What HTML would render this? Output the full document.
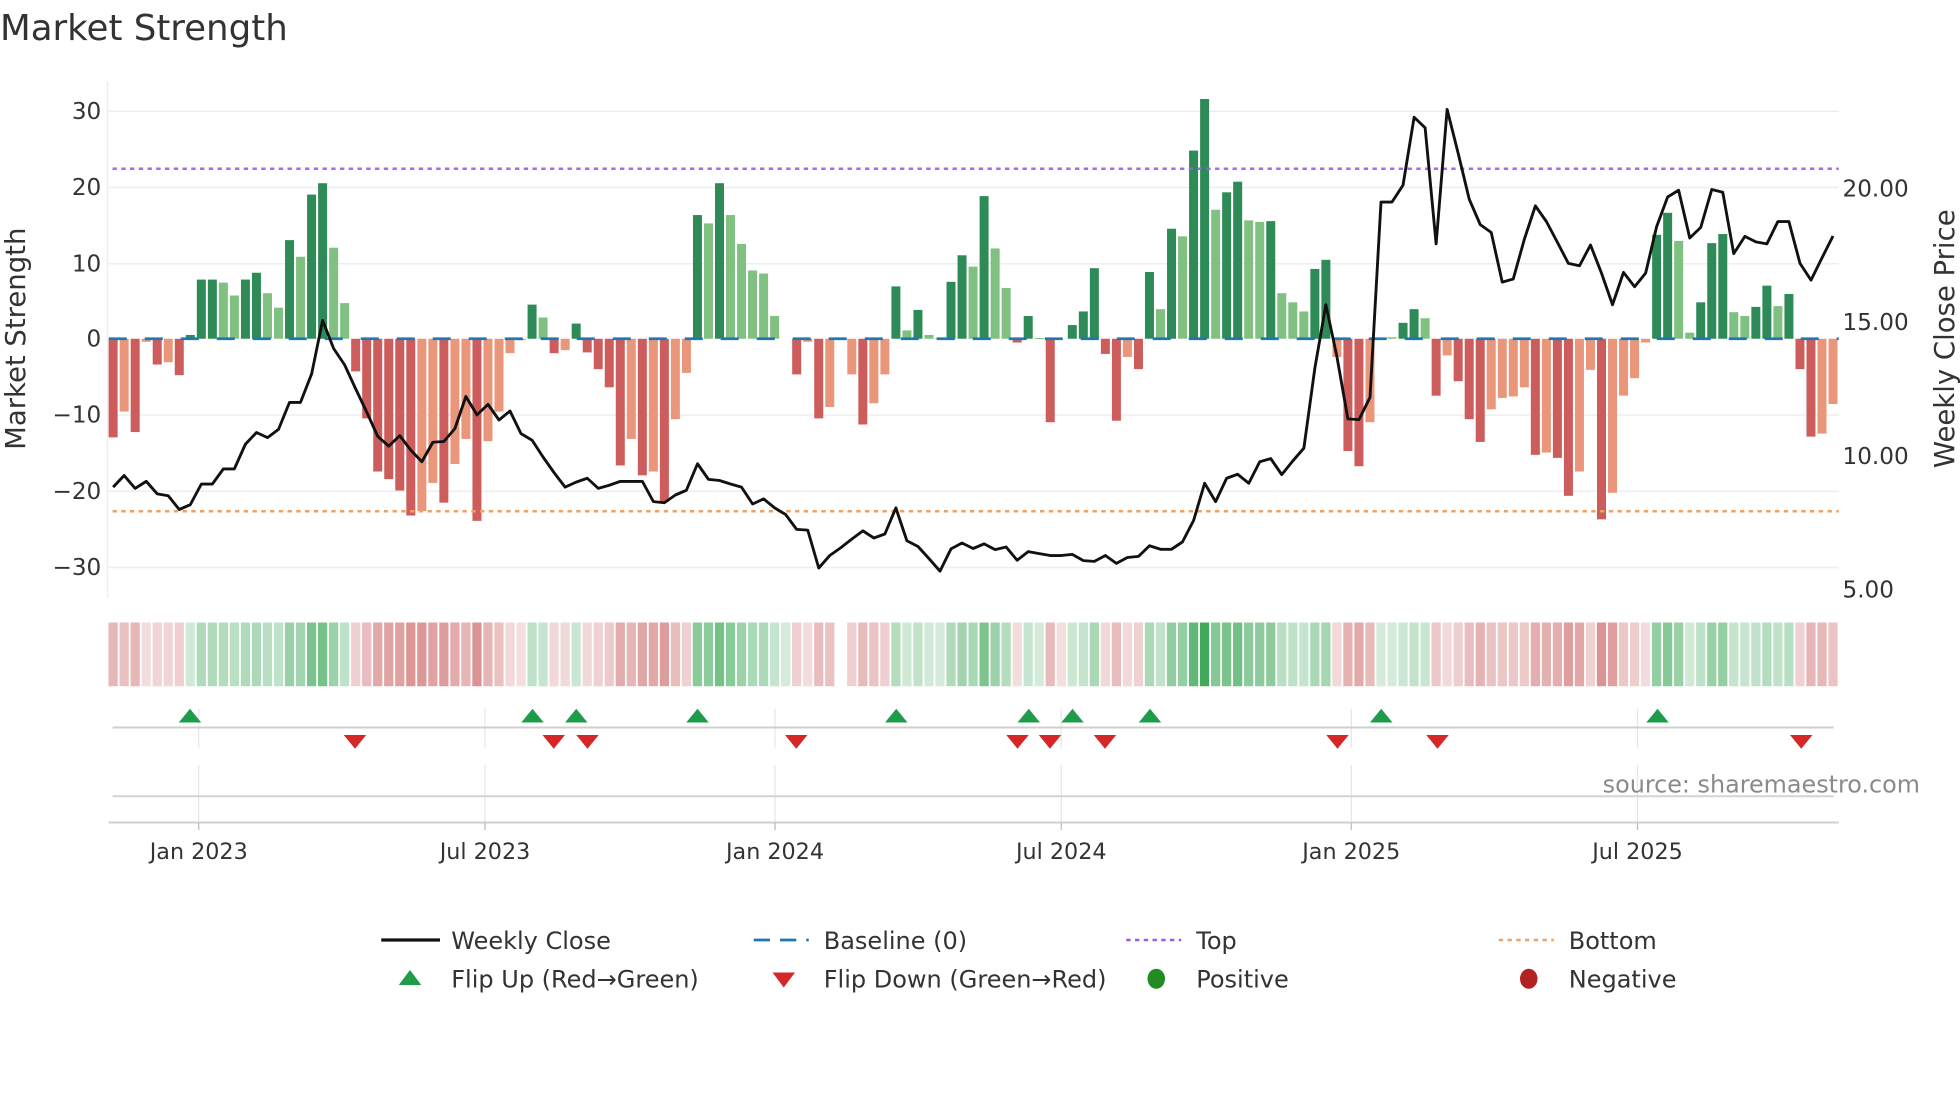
<!DOCTYPE html>
<html><head><meta charset="utf-8"><style>
html,body{margin:0;padding:0;background:#fff;}
svg{display:block;font-family:"DejaVu Sans","Liberation Sans",sans-serif;}
</style></head><body>
<svg id="s" width="1960" height="1102" viewBox="0 0 1568 881.6" xmlns="http://www.w3.org/2000/svg">
<rect width="1568" height="882" fill="#fff"/>
<g id="grid" stroke="#eceef1" stroke-width="1.2">
<line x1="87" x2="1471" y1="89" y2="89"/><line x1="87" x2="1471" y1="150" y2="150"/><line x1="87" x2="1471" y1="211" y2="211"/>
<line x1="87" x2="1471" y1="332" y2="332"/><line x1="87" x2="1471" y1="393" y2="393"/><line x1="87" x2="1471" y1="454" y2="454"/>
<line x1="86" x2="86" y1="65" y2="478"/>
</g>
<g id="bars"></g>
<line x1="87" x2="1471" y1="271" y2="271" stroke="#1f77b4" stroke-width="2.2" stroke-dasharray="14.4 14.4"/>
<line x1="90" x2="1471" y1="135" y2="135" stroke="#9b5de5" stroke-width="2" stroke-dasharray="3.5 3.5" opacity="0.9"/>
<line x1="90" x2="1471" y1="409" y2="409" stroke="#f0a060" stroke-width="2" stroke-dasharray="3.5 3.5"/>
<polyline id="price" fill="none" stroke="#111" stroke-width="2.3" stroke-linejoin="round"/>
<g id="strip"></g>
<g stroke="#e6e6e6" stroke-width="1">
<line x1="159" x2="159" y1="567" y2="598"/><line x1="388" x2="388" y1="567" y2="598"/><line x1="620" x2="620" y1="567" y2="598"/><line x1="849" x2="849" y1="567" y2="598"/><line x1="1081" x2="1081" y1="567" y2="598"/><line x1="1310" x2="1310" y1="567" y2="598"/>
<line x1="159" x2="159" y1="612" y2="657"/><line x1="388" x2="388" y1="612" y2="657"/><line x1="620" x2="620" y1="612" y2="657"/><line x1="849" x2="849" y1="612" y2="657"/><line x1="1081" x2="1081" y1="612" y2="657"/><line x1="1310" x2="1310" y1="612" y2="657"/>
</g>
<line x1="90" x2="1467" y1="582" y2="582" stroke="#cfcfcf" stroke-width="1.6"/>
<line x1="90" x2="1467" y1="637" y2="637" stroke="#d4d4d4" stroke-width="1.6"/>
<line x1="87" x2="1471" y1="658" y2="658" stroke="#cfcfcf" stroke-width="1.6"/>
<g stroke="#bbb" stroke-width="1"><line x1="159" x2="159" y1="658" y2="664"/><line x1="388" x2="388" y1="658" y2="664"/><line x1="620" x2="620" y1="658" y2="664"/><line x1="849" x2="849" y1="658" y2="664"/><line x1="1081" x2="1081" y1="658" y2="664"/><line x1="1310" x2="1310" y1="658" y2="664"/></g>
<g id="flips"></g>
<text x="0" y="32" font-size="28.5" fill="#333">Market Strength</text>
<g font-size="18.5" fill="#333" text-anchor="end">
<text x="81" y="95">30</text><text x="81" y="156">20</text><text x="81" y="217">10</text><text x="81" y="277">0</text>
<text x="81" y="338">−10</text><text x="81" y="399">−20</text><text x="81" y="460">−30</text>
</g>
<g font-size="18.5" fill="#333">
<text x="1474" y="157">20.00</text><text x="1474" y="264">15.00</text><text x="1474" y="371">10.00</text><text x="1474" y="478">5.00</text>
</g>
<text transform="translate(20,271) rotate(-90)" font-size="22" fill="#333" text-anchor="middle">Market Strength</text>
<text transform="translate(1563,271) rotate(-90)" font-size="22" fill="#333" text-anchor="middle">Weekly Close Price</text>
<g font-size="17.8" fill="#333" text-anchor="middle">
<text x="159" y="687">Jan 2023</text><text x="388" y="687">Jul 2023</text><text x="620" y="687">Jan 2024</text><text x="849" y="687">Jul 2024</text><text x="1081" y="687">Jan 2025</text><text x="1310" y="687">Jul 2025</text>
</g>
<text x="1536" y="634" font-size="19.1" fill="#8a8a8a" text-anchor="end">source: sharemaestro.com</text>
<g font-size="19.2" fill="#333">
<line x1="305" x2="352" y1="752" y2="752" stroke="#111" stroke-width="2.6"/>
<text x="361" y="759">Weekly Close</text>
<line x1="603" x2="647" y1="752" y2="752" stroke="#1f77b4" stroke-width="2.2" stroke-dasharray="13 8"/>
<text x="659" y="759">Baseline (0)</text>
<line x1="901" x2="945" y1="752" y2="752" stroke="#9b5de5" stroke-width="2" stroke-dasharray="3.5 3.5"/>
<text x="957" y="759">Top</text>
<line x1="1199" x2="1243" y1="752" y2="752" stroke="#f0a060" stroke-width="2" stroke-dasharray="3.5 3.5"/>
<text x="1255" y="759">Bottom</text>
<polygon points="319,788 337,788 328,776" fill="#1e9c4a"/>
<text x="361" y="790">Flip Up (Red→Green)</text>
<polygon points="618,778 636,778 627,790" fill="#d62728"/>
<text x="659" y="790">Flip Down (Green→Red)</text>
<ellipse cx="925" cy="783" rx="7" ry="8" fill="#228b22"/>
<text x="957" y="790">Positive</text>
<ellipse cx="1223" cy="783" rx="7" ry="8" fill="#b22222"/>
<text x="1255" y="790">Negative</text>
</g>
</svg>
<script>
(function(){
var NS="http://www.w3.org/2000/svg";
var B=[[-13,1],[-9.6,0],[-12.3,1],[-0.4,0],[-3.4,1],[-3.1,0],[-4.8,1],[0.5,1],[7.8,1],[7.8,1],[7.4,0],[5.7,0],[7.8,1],[8.7,1],[6,0],[4.1,0],[13,1],[10.8,0],[19,1],[20.5,1],[12,0],[4.7,0],[-4.3,1],[-10.5,1],[-17.5,1],[-18.5,1],[-20,1],[-23.3,1],[-22.7,0],[-19,0],[-21.6,1],[-16.5,0],[-13.2,0],[-24,1],[-13.5,0],[-9.6,0],[-1.9,0],[-0.2,0],[4.5,1],[2.8,0],[-1.9,1],[-1.5,0],[2,1],[-1.8,1],[-4,1],[-6.4,1],[-16.7,1],[-13.2,0],[-18,1],[-17.5,0],[-21.5,1],[-10.6,0],[-4.5,0],[16.3,1],
[15.2,0],[20.5,1],[16.3,0],[12.5,0],[9,0],[8.6,0],[3,0],[0,0],[-4.7,1],[-0.4,0],[-10.5,1],[-9,0],[0,0],[-4.7,0],[-11.3,1],[-8.5,0],[-4.7,0],[6.9,1],[1.1,0],[3.8,1],[0.5,0],[0.1,0],[7.5,1],[11,1],[9.5,0],[18.8,1],[11.9,0],[6.7,0],[-0.5,1],[3,1],[0.1,0],[-11,1],[0,0],[1.8,1],[3.6,1],[9.3,1],[-2,1],[-10.8,1],[-2.4,0],[-4,1],[8.8,1],[3.9,0],[14.5,1],[13.5,0],[24.8,1],[31.6,1],[17,0],[19.3,1],[20.7,1],[15.6,0],[15.4,0],[15.5,1],[6,0],
[4.8,0],[3.6,0],[9.2,1],[10.4,1],[-2.4,0],[-14.8,1],[-16.8,1],[-11,0],[0.1,0],[0.2,0],[2.1,1],[3.9,1],[2.7,0],[-7.5,1],[-2.2,0],[-5.6,1],[-10.6,1],[-13.6,1],[-9.3,0],[-7.8,0],[-7.6,0],[-6.4,0],[-15.3,1],[-15,0],[-15.7,1],[-20.7,1],[-17.5,0],[-4.1,0],[-23.8,1],[-20.3,0],[-7.5,0],[-5.2,0],[-0.5,0],[13.7,1],[16.6,1],[12.9,0],[0.8,0],[4.8,1],[12.6,1],[13.8,1],[3.5,0],[3,0],[4.2,1],[7,1],[4.3,0],[5.9,1],[-4,1],[-12.9,1],[-12.5,0],[-8.6,0]];
var P3=[1035,1005,1038,1020,1052,1057,1092,1080,1027,1027,988,988,925,895,908,887,818,818,745,608,680,722,783,843,905,930,903,940,970,920,918,885,803,850,823,863,840,898,915,958,998,1035,1022,1012,1038,1030,1020,1020,1020,1072,1075,1055,1043,975];
var P4=[1015,1018,1027,1035,1078,1065,1088,1105,1143,1145,1242,1210,1190,1168,1147,1165,1155,1088,1172,1187,1218,1250,1193,1178,1192,1180,1195,1188,1222,1200,1205,1210,1210,1207,1223,1225,1210,1230,1215,1212,1185,1194,1194,1175,1120,1025,1072,1012,1002,1025,970,962,1003];
var P5=[968,935,730,568,700,860,862,805,305,305,262,88,115,412,68,180,298,363,383,510,502,400,315,355,408,462,468,415,487,568,485,522,487,368,292,275,397,370,273,280,437,393,407,412,355,355,462,505,448,392];
var P=P3.concat(P4).concat(P5);
var step=8.82,x0=90.5,z=271,k=6.07;
var gb=document.getElementById('bars'),gs=document.getElementById('strip');
function el(t,a,p){var e=document.createElementNS(NS,t);for(var n in a)e.setAttribute(n,a[n]);p.appendChild(e);return e;}
for(var i=0;i<B.length;i++){
 var v=B[i][0],d=B[i][1],cx=x0+i*step,h=Math.abs(v)*k;
 var col=v>=0?(d?'#2e8b57':'#80c080'):(d?'#cd5c5c':'#e9967a');
 if(Math.abs(v)>0.05) el('rect',{x:cx-3.6,y:v>=0?z-h:z,width:7.2,height:Math.max(h,0.8),fill:col},gb);
 var m=Math.min(Math.abs(v)/32,1),c;
 if(i==66){c=null;}
 else if(v>0 || (v==0 && i<66) ){var a=0.22+0.75*m;c='rgba(58,166,85,'+a.toFixed(2)+')';}
 else {var a2=0.2+0.6*m;c='rgba(200,90,90,'+a2.toFixed(2)+')';}
 if(c) el('rect',{x:cx-3.7,y:498,width:7.4,height:51,fill:c},gs);
}
var pts=[];
for(var j=0;j<P.length;j++){pts.push((x0+j*step).toFixed(1)+','+(66.3+P[j]/3.2).toFixed(1));}
document.getElementById('price').setAttribute('points',pts.join(' '));
var gf=document.getElementById('flips');
[152,426,461,558,717,823,858,920,1105,1326].forEach(function(x){el('polygon',{points:(x-9)+',578 '+(x+9)+',578 '+x+',567',fill:'#1e9c4a'},gf);});
[284,443,470,637,814,840,884,1070,1150,1441].forEach(function(x){el('polygon',{points:(x-9)+',588 '+(x+9)+',588 '+x+',599',fill:'#d62728'},gf);});
})();
</script>
</body></html>
